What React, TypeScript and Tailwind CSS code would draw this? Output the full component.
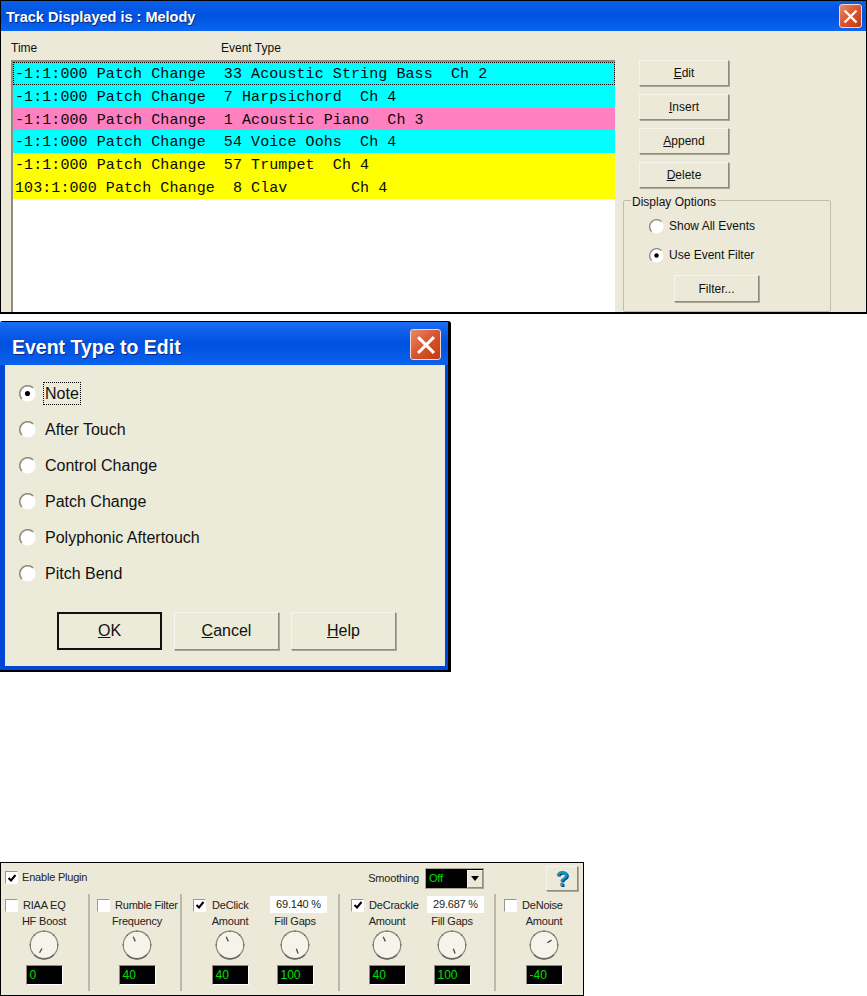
const ui = "font-['Liberation_Sans',Arial,sans-serif]";

const rows = [
  { text: "-1:1:000 Patch Change  33 Acoustic String Bass  Ch 2", bg: "bg-[#00ffff]", focus: true },
  { text: "-1:1:000 Patch Change  7 Harpsichord  Ch 4", bg: "bg-[#00ffff]" },
  { text: "-1:1:000 Patch Change  1 Acoustic Piano  Ch 3", bg: "bg-[#ff80c0]" },
  { text: "-1:1:000 Patch Change  54 Voice Oohs  Ch 4", bg: "bg-[#00ffff]" },
  { text: "-1:1:000 Patch Change  57 Trumpet  Ch 4", bg: "bg-[#ffff00]" },
  { text: "103:1:000 Patch Change  8 Clav       Ch 4", bg: "bg-[#ffff00]" },
];

function CloseButton({ big }: { big?: boolean }) {
  return (
    <div
      className={`flex items-center justify-center rounded-[3px] border border-[#f3d8cc] bg-gradient-to-br from-[#e8886a] via-[#d9532c] to-[#c03a10] ${
        big ? "h-[31px] w-[31px]" : "h-[24px] w-[23px]"
      }`}
    >
      <svg viewBox="0 0 16 16" className={big ? "h-5 w-5" : "h-[15px] w-[15px]"}>
        <path d="M2.5 2.5 L13.5 13.5 M13.5 2.5 L2.5 13.5" stroke="#fff" strokeWidth="2.4" strokeLinecap="square" />
      </svg>
    </div>
  );
}

function Underlined({ first, rest }: { first: string; rest: string }) {
  return (
    <span>
      <span className="underline">{first}</span>
      {rest}
    </span>
  );
}

function Button({ first, rest, className }: { first?: string; rest: string; className: string }) {
  return (
    <div
      className={`flex items-center justify-center border border-[#f6f4ec] border-r-[#8e8b7c] border-b-[#8e8b7c] shadow-[1px_1px_0_#aca899] text-[#111] ${className}`}
    >
      {first ? <Underlined first={first} rest={rest} /> : rest}
    </div>
  );
}

function Radio({ checked, size = 15 }: { checked?: boolean; size?: number }) {
  return (
    <svg width={size} height={size} viewBox="0 0 16 16" className="shrink-0">
      <circle cx="8" cy="8" r="7.5" fill="#fff" />
      <path d="M2.7 13.3 A7.5 7.5 0 0 1 13.3 2.7" fill="none" stroke="#8f8d82" strokeWidth="1.5" />
      {checked && <circle cx="8" cy="8" r="2.4" fill="#000" />}
    </svg>
  );
}

function TrackDialog() {
  return (
    <div className={`flex h-[314px] flex-col overflow-hidden border border-b-2 border-black bg-[#ece9d8] text-[12px] text-[#111] ${ui}`}>
      <div className="flex h-[30px] shrink-0 items-center justify-between bg-gradient-to-b from-[#0a5ee6] via-[#0052e0] to-[#0a66f0] pl-[5px] pr-[4px]">
        <span className="mt-[3px] text-[14.5px] font-bold text-white [text-shadow:1px_1px_0_#0a2a80]">Track Displayed is : Melody</span>
        <CloseButton />
      </div>
      <div className="flex min-h-0 flex-1">
        <div className="flex w-[614px] shrink-0 flex-col pl-[10px]">
          <div className="flex h-[29px] shrink-0 items-center pt-[4px]">
            <span className="w-[210px]">Time</span>
            <span>Event Type</span>
          </div>
          <div className="flex-1 border-l-2 border-t-2 border-[#8f8c80] bg-white">
            {rows.map((r) => (
              <div
                key={r.text}
                className={`flex h-[22.75px] items-center whitespace-pre pl-[2px] pt-[4px] font-['Liberation_Mono',monospace] text-[15px] tracking-[0.08px] text-[#0a0a0a] ${r.bg} ${
                  r.focus ? "border border-dotted border-black pl-px" : ""
                }`}
              >
                {r.text}
              </div>
            ))}
          </div>
        </div>
        <div className="flex flex-col pl-[8px] pt-[29px]">
          <div className="ml-[16px] flex flex-col gap-[8px]">
            <Button first="E" rest="dit" className="h-[26px] w-[90px]" />
            <Button first="I" rest="nsert" className="h-[26px] w-[90px]" />
            <Button first="A" rest="ppend" className="h-[26px] w-[90px]" />
            <Button first="D" rest="elete" className="h-[26px] w-[90px]" />
          </div>
          <div className="relative mt-[12px] h-[120px] w-[208px] rounded-[2px] border border-[#c0bdaa] pl-[25px] pt-[16px]">
            <span className="absolute -top-[8px] left-[7px] bg-[#ece9d8] px-px">Display Options</span>
            <div className="flex items-center gap-[5px]">
              <Radio />
              <span>Show All Events</span>
            </div>
            <div className="mt-[11px] flex items-center gap-[5px]">
              <Radio checked />
              <span>Use Event Filter</span>
            </div>
            <Button rest="Filter..." className="ml-[25px] mt-[11px] h-[27px] w-[85px]" />
          </div>
        </div>
      </div>
    </div>
  );
}

const eventTypes = ["Note", "After Touch", "Control Change", "Patch Change", "Polyphonic Aftertouch", "Pitch Bend"];

function EventDialog() {
  return (
    <div className={`mt-[7px] flex h-[351px] w-[451px] flex-col overflow-hidden rounded-t-[3px] border-r-[3px] border-b-2 border-black bg-[#0047d6] ${ui}`}>
      <div className="flex h-[44px] shrink-0 items-center justify-between border-t border-black bg-gradient-to-b from-[#1a6cf0] via-[#0050e0] to-[#0a62ec] pl-[12px] pr-[7px] pt-[2px]">
        <span className="mt-[6px] text-[19.5px] font-bold text-white [text-shadow:1px_1px_0_#0a2a80]">Event Type to Edit</span>
        <CloseButton big />
      </div>
      <div className="mb-[4px] ml-[5px] mr-[3px] flex flex-1 flex-col bg-[#ecebd9] pl-[14px] text-[16px] text-[#111]">
        <div className="flex flex-col gap-[15px] pt-[18px]">
          {eventTypes.map((t, i) => (
            <div key={t} className="flex h-[21px] items-center gap-[9px]">
              <Radio checked={i === 0} size={17} />
              <span className={i === 0 ? "-ml-[2px] border border-dotted border-black px-px leading-[21px]" : ""}>{t}</span>
            </div>
          ))}
        </div>
        <div className="ml-[38px] mt-[28px] flex gap-[12px]">
          <div className="flex h-[38px] w-[105px] items-center justify-center border-2 border-[#111]">
            <Underlined first="O" rest="K" />
          </div>
          <Button first="C" rest="ancel" className="h-[38px] w-[105px]" />
          <Button first="H" rest="elp" className="h-[38px] w-[105px]" />
        </div>
      </div>
    </div>
  );
}

function Check({ checked }: { checked?: boolean }) {
  return (
    <div className="flex h-[13px] w-[13px] shrink-0 items-center justify-center border border-[#9b988a] border-r-white border-b-white bg-white">
      {checked && (
        <svg viewBox="0 0 10 10" className="h-[10px] w-[10px]">
          <path d="M1.5 5 L4 7.5 L8.5 2" fill="none" stroke="#000" strokeWidth="2" />
        </svg>
      )}
    </div>
  );
}

function Knob({ angle }: { angle: number }) {
  return (
    <svg width="30" height="30" viewBox="0 0 30 30" className="block">
      <circle cx="15" cy="15" r="13.8" fill="#f5f4ea" stroke="#8a887c" strokeWidth="1.2" />
      <path d="M5.2 24.8 A13.8 13.8 0 0 0 24.8 24.8" fill="none" stroke="#6a685e" strokeWidth="1.6" />
      <path d="M15 0.5 V2 M0.5 15 H2 M29.5 15 H28 M4.7 4.7 L5.8 5.8 M25.3 4.7 L24.2 5.8" stroke="#55534a" strokeWidth="1" />
      <g transform={`rotate(${angle} 15 15)`}>
        <line x1="15" y1="6" x2="15" y2="11" stroke="#4a4a44" strokeWidth="1.3" />
      </g>
    </svg>
  );
}

function Dial({ label, angle, value, className }: { label: string; angle: number; value: string; className: string }) {
  return (
    <div className={`flex w-[70px] flex-col items-center ${className}`}>
      <span className="h-[15px] whitespace-nowrap leading-[15px]">{label}</span>
      <div className="mt-[1px]">
        <Knob angle={angle} />
      </div>
      <div className="mt-[5px] h-[20px] w-[37px] border border-[#8e8b7c] border-r-white border-b-white bg-black pl-[3px] text-[12px] leading-[18px] tracking-normal text-[#00e000]">
        {value}
      </div>
    </div>
  );
}

function PercentBox({ value }: { value: string }) {
  return <div className="h-[17px] w-[57px] -translate-y-px bg-white text-center leading-[17px]">{value}</div>;
}

function PluginPanel() {
  return (
    <div className={`mt-[190px] h-[134px] w-[584px] border border-black bg-[#ece9d8] text-[11px] tracking-[-0.2px] text-[#222] ${ui}`}>
      <div className="flex h-[31px] items-center pl-[4px] pr-[5px]">
        <div className="-translate-y-px">
          <Check checked />
        </div>
        <span className="ml-[4px] -translate-y-px">Enable Plugin</span>
        <span className="ml-auto">Smoothing</span>
        <div className="ml-[7px] flex h-[19px] w-[57px] items-center justify-between bg-black pl-[3px] text-[#00e000] ring-1 ring-[#a8a595]">
          Off
          <span className="flex h-[18px] w-[16px] items-center justify-center border border-[#f6f4ec] border-r-[#8e8b7c] border-b-[#8e8b7c] bg-[#ece9d8]">
            <svg viewBox="0 0 8 5" className="h-[5px] w-[8px]">
              <path d="M0 0 H8 L4 5 Z" fill="#000" />
            </svg>
          </span>
        </div>
        <div className="ml-[63px] flex h-[25px] w-[32px] items-center justify-center border border-[#f6f4ec] border-r-[#8e8b7c] border-b-[#8e8b7c] shadow-[1px_1px_0_#aca899]">
          <span className="font-['Liberation_Sans',sans-serif] text-[22px] font-bold leading-none text-[#0a9ab0] [text-shadow:1px_1px_0_#0a3a8a]">?</span>
        </div>
      </div>
      <div className="flex h-[97px]">
        <div className="w-[89px] border-r-2 border-[#bcb9aa] pl-[4px] pt-[3px]">
          <div className="flex h-[16px] items-center gap-[5px]">
            <Check />
            <span>RIAA EQ</span>
          </div>
          <Dial label="HF Boost" angle={-150} value="0" className="ml-[4px] mt-[1px]" />
        </div>
        <div className="w-[92px] border-r-2 border-[#bcb9aa] pl-[7px] pt-[3px]">
          <div className="flex h-[16px] items-center gap-[5px]">
            <Check />
            <span className="whitespace-nowrap">Rumble Filter</span>
          </div>
          <Dial label="Frequency" angle={-25} value="40" className="ml-[5px] mt-[1px]" />
        </div>
        <div className="w-[158px] border-r-2 border-[#bcb9aa] pl-[11px] pt-[3px]">
          <div className="flex h-[16px] items-center gap-[6px]">
            <Check checked />
            <span className="w-[52px]">DeClick</span>
            <PercentBox value="69.140 %" />
          </div>
          <div className="mt-[1px] flex">
            <Dial label="Amount" angle={-25} value="40" className="ml-[2px]" />
            <Dial label="Fill Gaps" angle={160} value="100" className="-ml-[5px]" />
          </div>
        </div>
        <div className="w-[156px] border-r-2 border-[#bcb9aa] pl-[11px] pt-[3px]">
          <div className="flex h-[16px] items-center gap-[5px]">
            <Check checked />
            <span className="w-[53px]">DeCrackle</span>
            <PercentBox value="29.687 %" />
          </div>
          <div className="mt-[1px] flex">
            <Dial label="Amount" angle={-25} value="40" className="ml-[1px]" />
            <Dial label="Fill Gaps" angle={160} value="100" className="-ml-[5px]" />
          </div>
        </div>
        <div className="pl-[8px] pt-[3px]">
          <div className="flex h-[16px] items-center gap-[5px]">
            <Check />
            <span>DeNoise</span>
          </div>
          <Dial label="Amount" angle={57} value="-40" className="ml-[5px] mt-[1px]" />
        </div>
      </div>
    </div>
  );
}

export default function App() {
  return (
    <div className="h-[996px] w-[867px] overflow-hidden bg-white">
      <TrackDialog />
      <EventDialog />
      <PluginPanel />
    </div>
  );
}
